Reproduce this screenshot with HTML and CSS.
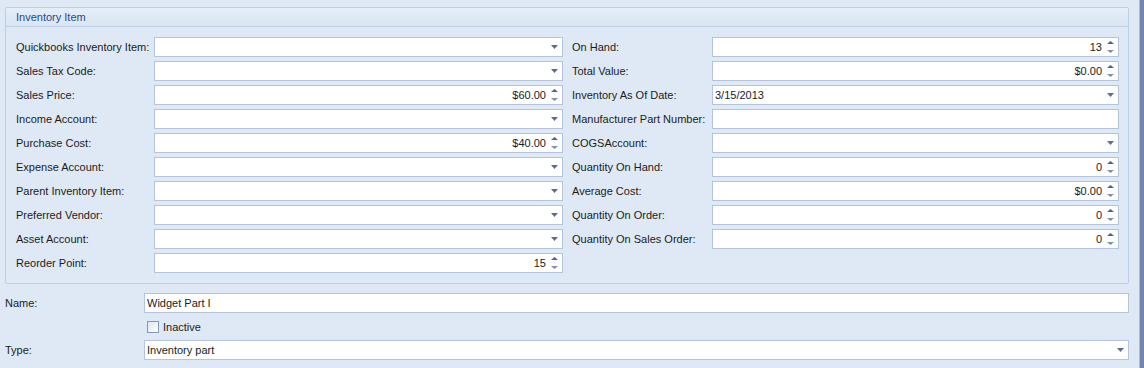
FILE: index.html
```html
<!DOCTYPE html>
<html>
<head>
<meta charset="utf-8">
<link rel="stylesheet" href="styles.css">
</head>
<body>
<div class="page">
  <div class="content">
    <div class="group">
      <div class="group-head">Inventory Item</div>
      <div class="grid">
        <label class="lbl">Quickbooks Inventory Item:</label>
        <div class="inp combo"><span class="val"></span><svg class="arrow" width="7" height="4" viewBox="0 0 7 4"><polygon points="0,0 7,0 3.5,4" /></svg></div>
        <label class="lbl r">On Hand:</label>
        <div class="inp spin"><span class="val num">13</span><svg class="spn" width="7" height="12" viewBox="0 0 7 12"><polygon points="3.5,0 7,3 0,3"/><polygon class="dn" points="0,9 7,9 3.5,12"/></svg></div>

        <label class="lbl">Sales Tax Code:</label>
        <div class="inp combo"><span class="val"></span><svg class="arrow" width="7" height="4" viewBox="0 0 7 4"><polygon points="0,0 7,0 3.5,4" /></svg></div>
        <label class="lbl r">Total Value:</label>
        <div class="inp spin"><span class="val num">$0.00</span><svg class="spn" width="7" height="12" viewBox="0 0 7 12"><polygon points="3.5,0 7,3 0,3"/><polygon class="dn" points="0,9 7,9 3.5,12"/></svg></div>

        <label class="lbl">Sales Price:</label>
        <div class="inp spin"><span class="val num">$60.00</span><svg class="spn" width="7" height="12" viewBox="0 0 7 12"><polygon points="3.5,0 7,3 0,3"/><polygon class="dn" points="0,9 7,9 3.5,12"/></svg></div>
        <label class="lbl r">Inventory As Of Date:</label>
        <div class="inp combo"><span class="val">3/15/2013</span><svg class="arrow" width="7" height="4" viewBox="0 0 7 4"><polygon points="0,0 7,0 3.5,4" /></svg></div>

        <label class="lbl">Income Account:</label>
        <div class="inp combo"><span class="val"></span><svg class="arrow" width="7" height="4" viewBox="0 0 7 4"><polygon points="0,0 7,0 3.5,4" /></svg></div>
        <label class="lbl r">Manufacturer Part Number:</label>
        <div class="inp"><span class="val"></span></div>

        <label class="lbl">Purchase Cost:</label>
        <div class="inp spin"><span class="val num">$40.00</span><svg class="spn" width="7" height="12" viewBox="0 0 7 12"><polygon points="3.5,0 7,3 0,3"/><polygon class="dn" points="0,9 7,9 3.5,12"/></svg></div>
        <label class="lbl r">COGSAccount:</label>
        <div class="inp combo"><span class="val"></span><svg class="arrow" width="7" height="4" viewBox="0 0 7 4"><polygon points="0,0 7,0 3.5,4" /></svg></div>

        <label class="lbl">Expense Account:</label>
        <div class="inp combo"><span class="val"></span><svg class="arrow" width="7" height="4" viewBox="0 0 7 4"><polygon points="0,0 7,0 3.5,4" /></svg></div>
        <label class="lbl r">Quantity On Hand:</label>
        <div class="inp spin"><span class="val num">0</span><svg class="spn" width="7" height="12" viewBox="0 0 7 12"><polygon points="3.5,0 7,3 0,3"/><polygon class="dn" points="0,9 7,9 3.5,12"/></svg></div>

        <label class="lbl">Parent Inventory Item:</label>
        <div class="inp combo"><span class="val"></span><svg class="arrow" width="7" height="4" viewBox="0 0 7 4"><polygon points="0,0 7,0 3.5,4" /></svg></div>
        <label class="lbl r">Average Cost:</label>
        <div class="inp spin"><span class="val num">$0.00</span><svg class="spn" width="7" height="12" viewBox="0 0 7 12"><polygon points="3.5,0 7,3 0,3"/><polygon class="dn" points="0,9 7,9 3.5,12"/></svg></div>

        <label class="lbl">Preferred Vendor:</label>
        <div class="inp combo"><span class="val"></span><svg class="arrow" width="7" height="4" viewBox="0 0 7 4"><polygon points="0,0 7,0 3.5,4" /></svg></div>
        <label class="lbl r">Quantity On Order:</label>
        <div class="inp spin"><span class="val num">0</span><svg class="spn" width="7" height="12" viewBox="0 0 7 12"><polygon points="3.5,0 7,3 0,3"/><polygon class="dn" points="0,9 7,9 3.5,12"/></svg></div>

        <label class="lbl">Asset Account:</label>
        <div class="inp combo"><span class="val"></span><svg class="arrow" width="7" height="4" viewBox="0 0 7 4"><polygon points="0,0 7,0 3.5,4" /></svg></div>
        <label class="lbl r">Quantity On Sales Order:</label>
        <div class="inp spin"><span class="val num">0</span><svg class="spn" width="7" height="12" viewBox="0 0 7 12"><polygon points="3.5,0 7,3 0,3"/><polygon class="dn" points="0,9 7,9 3.5,12"/></svg></div>

        <label class="lbl">Reorder Point:</label>
        <div class="inp spin"><span class="val num">15</span><svg class="spn" width="7" height="12" viewBox="0 0 7 12"><polygon points="3.5,0 7,3 0,3"/><polygon class="dn" points="0,9 7,9 3.5,12"/></svg></div>
      </div>
    </div>

    <div class="bottom">
      <label class="lbl">Name:</label>
      <div class="inp"><span class="val">Widget Part I</span></div>
      <span></span>
      <div class="chkrow"><span class="chk"></span><span class="chk-lbl">Inactive</span></div>
      <label class="lbl">Type:</label>
      <div class="inp combo"><span class="val">Inventory part</span><svg class="arrow" width="7" height="4" viewBox="0 0 7 4"><polygon points="0,0 7,0 3.5,4" /></svg></div>
    </div>
  </div>
  <div class="edge"></div>
</div>
</body>
</html>
```

FILE: styles.css
```css
html, body {
  margin: 0;
  padding: 0;
}
body {
  background: #dfe9f5;
  font-family: "Liberation Sans", Arial, sans-serif;
  font-size: 11px;
  color: #1b1b1b;
  width: 1144px;
  height: 368px;
  overflow: hidden;
}
.page {
  display: flex;
  height: 368px;
}
.content {
  width: 1140px;
}
.edge {
  width: 4px;
  margin-left: 0;
  background: #6f87ad;
  border-left: 1px solid #a9bcd8;
}
.group {
  margin: 7px 0 0 5px;
  width: 1122px;
  border: 1px solid #bccde6;
  border-radius: 2px;
  background: #dfe9f5;
}
.group-head {
  height: 18px;
  line-height: 18px;
  padding-left: 10px;
  color: #1f4a8f;
  background: linear-gradient(#e4edf8, #dae6f4);
  border-bottom: 1px solid #bccde6;
}
.grid {
  display: grid;
  grid-template-columns: 138px 409px 149px 407px;
  grid-auto-rows: 20px;
  row-gap: 4px;
  padding: 10px 0 10px 10px;
}
.lbl {
  display: flex;
  align-items: center;
  white-space: nowrap;
}
.lbl.r {
  padding-left: 9px;
}
.inp {
  box-sizing: border-box;
  height: 20px;
  background: #fff;
  border: 1px solid #b4c4dc;
  display: flex;
  align-items: center;
  padding: 0 1px 0 2px;
}
.val {
  flex: 1;
  white-space: nowrap;
  overflow: hidden;
}
.val.num {
  text-align: right;
  padding-right: 5px;
}
.arrow {
  margin: 0 3px 0 4px;
  fill: #5d6f8e;
}
.spn {
  margin: 0 3px 0 0;
  fill: #4f6287;
}
.spn .dn {
  fill: #7d8fae;
}
.bottom {
  display: grid;
  grid-template-columns: 139px 985px;
  grid-template-rows: 20px 21px 20px;
  row-gap: 3px;
  margin: 9px 0 0 5px;
}
.chkrow {
  display: flex;
  align-items: center;
  padding-left: 3px;
}
.chk {
  box-sizing: border-box;
  width: 12px;
  height: 12px;
  border: 1px solid #8497b8;
  background: linear-gradient(135deg, #dfe6f0, #ffffff);
  margin-right: 4px;
}
.chk-lbl {
  font-size: 11px;
}
```
